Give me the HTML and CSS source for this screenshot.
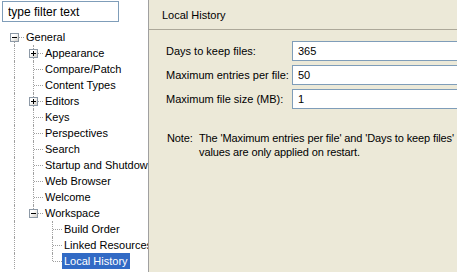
FILE: index.html
```html
<!DOCTYPE html>
<html>
<head>
<meta charset="utf-8">
<link rel="stylesheet" href="styles.css">
</head>
<body>
<div class="app">
  <aside class="nav">
    <input class="filter" type="text" value="type filter text">
    <ul class="tree">
      <li class="row"><span class="cell root"><span class="box minus"></span></span><span class="label">General</span></li>
      <li class="row"><span class="cell pipe"></span><span class="cell tee"><span class="box plus"></span></span><span class="label">Appearance</span></li>
      <li class="row"><span class="cell pipe"></span><span class="cell tee"></span><span class="label">Compare/Patch</span></li>
      <li class="row"><span class="cell pipe"></span><span class="cell tee"></span><span class="label">Content Types</span></li>
      <li class="row"><span class="cell pipe"></span><span class="cell tee"><span class="box plus"></span></span><span class="label">Editors</span></li>
      <li class="row"><span class="cell pipe"></span><span class="cell tee"></span><span class="label">Keys</span></li>
      <li class="row"><span class="cell pipe"></span><span class="cell tee"></span><span class="label">Perspectives</span></li>
      <li class="row"><span class="cell pipe"></span><span class="cell tee"></span><span class="label">Search</span></li>
      <li class="row"><span class="cell pipe"></span><span class="cell tee"></span><span class="label">Startup and Shutdown</span></li>
      <li class="row"><span class="cell pipe"></span><span class="cell tee"></span><span class="label">Web Browser</span></li>
      <li class="row"><span class="cell pipe"></span><span class="cell tee"></span><span class="label">Welcome</span></li>
      <li class="row"><span class="cell pipe"></span><span class="cell elbow"><span class="box minus"></span></span><span class="label">Workspace</span></li>
      <li class="row"><span class="cell pipe"></span><span class="cell blank"></span><span class="cell tee"></span><span class="label">Build Order</span></li>
      <li class="row"><span class="cell pipe"></span><span class="cell blank"></span><span class="cell tee"></span><span class="label">Linked Resources</span></li>
      <li class="row"><span class="cell pipe"></span><span class="cell blank"></span><span class="cell elbow"></span><span class="label selected">Local History</span></li>
    </ul>
  </aside>
  <main class="main">
    <div class="title">Local History</div>
    <div class="form">
      <label class="flabel">Days to keep files:</label><input class="field" type="text" value="365">
      <label class="flabel">Maximum entries per file:</label><input class="field" type="text" value="50">
      <label class="flabel">Maximum file size (MB):</label><input class="field" type="text" value="1">
    </div>
    <div class="note">
      <span>Note:</span>
      <span>The 'Maximum entries per file' and 'Days to keep files'<br>values are only applied on restart.</span>
    </div>
  </main>
</div>
</body>
</html>
```

FILE: styles.css
```css
html, body {
  margin: 0;
  padding: 0;
  width: 457px;
  height: 272px;
  overflow: hidden;
}
body {
  font-family: "Liberation Sans", Arial, sans-serif;
  font-size: 11px;
  color: #000;
}
.app {
  display: flex;
  width: 457px;
  height: 272px;
}
.nav {
  width: 148px;
  flex: none;
  background: #fff;
  border-right: 1px solid #a0a0a0;
  overflow: hidden;
}
.filter {
  display: block;
  box-sizing: border-box;
  width: 117px;
  height: 21px;
  margin: 1px 0 0 2px;
  padding: 0 0 0 5px;
  border: 1px solid #7f9db9;
  font-family: inherit;
  font-size: 12px;
  color: #000;
  outline: none;
}
.tree {
  list-style: none;
  margin: 7px 0 0 0;
  padding: 0 0 0 5px;
}
.row {
  display: flex;
  height: 16px;
  line-height: 16px;
  white-space: nowrap;
}
.cell {
  position: relative;
  flex: none;
  width: 19px;
  height: 16px;
}
.cell::before,
.cell::after {
  content: "";
  position: absolute;
}
.pipe::before,
.tee::before,
.elbow::before,
.root::before {
  left: 9px;
  top: 0;
  bottom: 0;
  border-left: 1px dotted #a0a0a0;
}
.elbow::before {
  bottom: 8px;
}
.root::before {
  top: 8px;
}
.tee::after,
.elbow::after,
.root::after {
  left: 10px;
  top: 8px;
  width: 9px;
  border-top: 1px dotted #a0a0a0;
}
.box {
  position: absolute;
  left: 5px;
  top: 4px;
  width: 9px;
  height: 9px;
  box-sizing: border-box;
  border: 1px solid #8d99a6;
  background: linear-gradient(135deg, #ffffff 30%, #d4d0c8);
  z-index: 1;
}
.box::before {
  content: "";
  position: absolute;
  left: 1px;
  top: 3px;
  width: 5px;
  height: 1px;
  background: #000;
}
.plus::after {
  content: "";
  position: absolute;
  left: 3px;
  top: 1px;
  width: 1px;
  height: 5px;
  background: #000;
}
.label {
  padding: 0 2px;
  height: 16px;
}
.selected {
  background: #316ac5;
  color: #fff;
  padding: 0 2px 0 2px;
}
.main {
  flex: 1;
  background: #ece9d8;
  overflow: hidden;
}
.title {
  display: flex;
  align-items: center;
  padding-left: 13px;
  border-bottom: 1px solid #aca899;
  box-sizing: border-box;
  height: 30px;
}
.form {
  display: grid;
  grid-template-columns: 126px 200px;
  row-gap: 4px;
  padding: 11px 0 0 17px;
  align-items: center;
}
.field {
  box-sizing: border-box;
  width: 200px;
  height: 20px;
  border: 1px solid #7f9db9;
  padding: 0 0 0 5px;
  margin: 0;
  font-family: inherit;
  font-size: 11px;
  color: #000;
  background: #fff;
  outline: none;
}
.note {
  display: grid;
  grid-template-columns: 32px auto;
  margin-top: 22px;
  padding-left: 18px;
  line-height: 14px;
  white-space: nowrap;
  letter-spacing: -0.12px;
}
```
